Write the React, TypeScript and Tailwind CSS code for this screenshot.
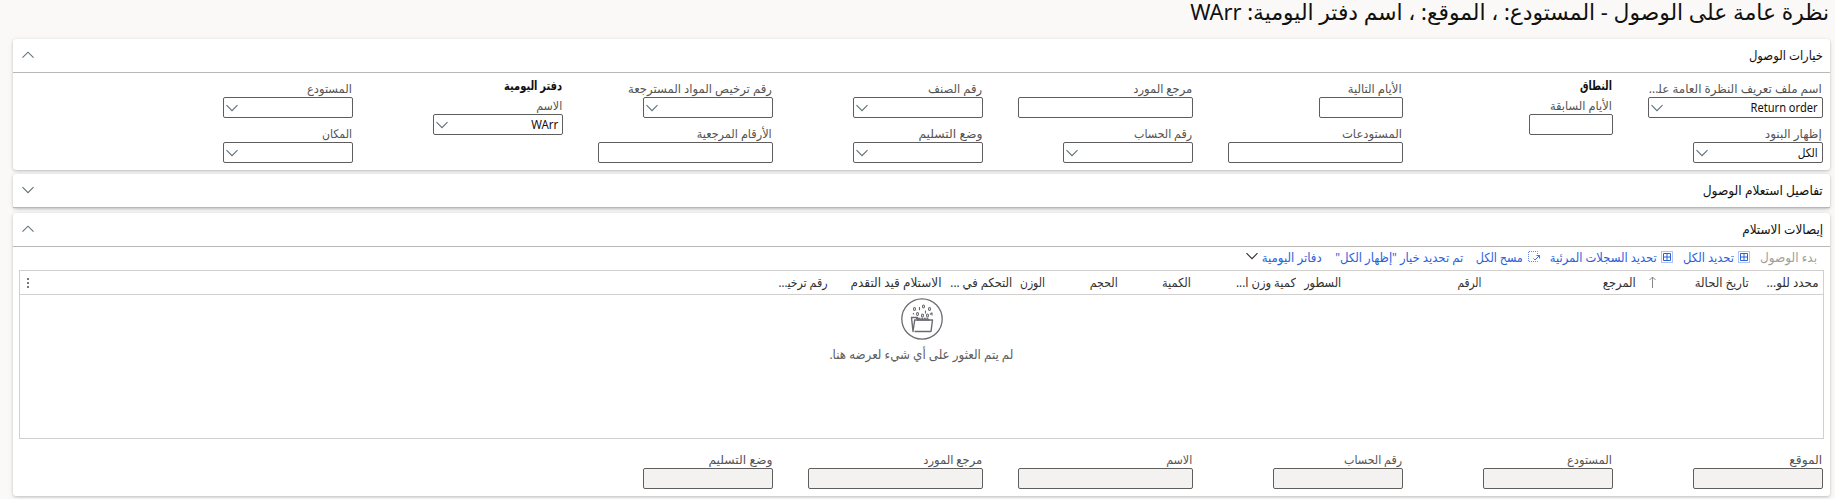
import { useLayoutEffect, useRef, useState, type ReactNode } from 'react';
import clsx from 'clsx';

/** Squeezes a single line of text into the width given by its class. */
function Fit({ className, children }: { className: string; children: ReactNode }) {
  const box = useRef<HTMLSpanElement>(null);
  const inner = useRef<HTMLSpanElement>(null);
  const [scale, setScale] = useState(1);
  useLayoutEffect(() => {
    if (box.current && inner.current && inner.current.offsetWidth > 0) {
      setScale(box.current.clientWidth / inner.current.getBoundingClientRect().width);
    }
  }, []);
  return (
    <span ref={box} className={clsx('block shrink-0 whitespace-nowrap', className)}>
      <span ref={inner} className="inline-block origin-right" style={{ transform: `scaleX(${scale})` }}>
        {children}
      </span>
    </span>
  );
}

function Chevron({ up = false, className = 'text-[#5f7079]' }: { up?: boolean; className?: string }) {
  return (
    <svg width="12" height="8" viewBox="0 0 12 8" fill="none" stroke="currentColor" strokeWidth="1.1" className={clsx('shrink-0', className)}>
      <path d={up ? 'M.5 6.7 6 1.2l5.5 5.5' : 'M.5 1.2 6 6.7l5.5-5.5'} />
    </svg>
  );
}

type FieldProps = {
  label: string;
  lw: string;
  w: string;
  value?: string;
  vw?: string;
  combo?: boolean;
  disabled?: boolean;
};

function Field({ label, lw, w, value, vw, combo, disabled }: FieldProps) {
  return (
    <div className="flex flex-col">
      <div className="flex h-4 pr-px text-[12px] leading-4 text-[#555351]">
        <Fit className={lw}>{label}</Fit>
      </div>
      <div
        className={clsx(
          'flex h-[21px] items-center justify-between rounded-[2px] border border-[#605e5c] pr-1 pl-[2px] text-[12px] leading-[19px] text-[#11100f]',
          w,
          disabled ? 'bg-[#f3f2f1]' : 'bg-white',
        )}
      >
        {value && vw ? <Fit className={vw}>{value}</Fit> : <span />}
        {combo && <Chevron />}
      </div>
    </div>
  );
}

function Column({ heading, hw, children }: { heading?: string; hw?: string; children: ReactNode }) {
  return (
    <div className={clsx('flex w-[175px] shrink-0 flex-col gap-2', heading ? 'pt-[4px]' : 'pt-2')}>
      {heading && hw ? (
        <div>
          <div className="flex h-[21px] pr-px font-['Noto_Sans','DejaVu_Sans_Condensed',sans-serif] text-[12.5px] leading-[17px] font-bold text-[#11100f]">
            <Fit className={hw}>{heading}</Fit>
          </div>
          {children}
        </div>
      ) : (
        children
      )}
    </div>
  );
}

function CardHeader({ title, tw, open }: { title: string; tw: string; open: boolean }) {
  return (
    <header className="flex h-[34px] shrink-0 items-center justify-between border-b border-[#b9b8b7] pr-[7px] pb-[2px] pl-[9px] text-[13px] leading-5 text-[#11100f]">
      <Fit className={tw}>{title}</Fit>
      <Chevron up={open} />
    </header>
  );
}

const card = 'rounded-[3px] bg-white shadow-[0_1px_3px_rgba(0,0,0,0.2),0_1px_6px_rgba(0,0,0,0.06)]';

function SelectGridIcon() {
  return (
    <svg width="12" height="12" viewBox="0 0 12 12" fill="none" stroke="#2a62dc" className="-mt-[2px] shrink-0">
      <rect x=".5" y=".5" width="11" height="11" strokeDasharray="1 1" strokeOpacity=".75" />
      <path d="M2.5 2.5h7v7h-7zM6 2.5v7M2.5 6h7" />
    </svg>
  );
}

function ClearIcon() {
  return (
    <svg width="12" height="12" viewBox="0 0 12 12" fill="none" stroke="#2a62dc" className="-mt-[2px] shrink-0">
      <path d="M9.5 3V.5h-9v10h9V9" strokeDasharray="1 1" strokeOpacity=".75" />
      <path d="M5.500 7.500 7 9l4.500-4.500M8.500 4.500h3v3" strokeWidth=".9" />
    </svg>
  );
}

function EmptyIcon() {
  return (
    <svg width="42" height="42" viewBox="0 0 42 42" fill="none" stroke="#6b6a70" className="shrink-0">
      <circle cx="21" cy="21" r="20.200" strokeWidth="1.300" />
      <path d="M13.500 33.500h16.500l1.500-11.500H13.700L12 33.500 10.500 19.500h6l1.500 2.500" strokeWidth="1.400" strokeLinejoin="round" />
      <path d="M15 20.500h13M16 22h12.500" strokeWidth="1.400" strokeDasharray="2 .6" />
      <g strokeWidth="1.100">
        <ellipse cx="13.500" cy="11" rx="1" ry="1.500" />
        <path d="M18.500 9v3.200M24.500 12.500v3M29 16.500l1.500-1.500M12 15l1 1.500M31 14.500v3" />
        <ellipse cx="22.500" cy="8.500" rx="1" ry="1.500" />
        <ellipse cx="28.500" cy="11" rx="1" ry="1.500" />
        <ellipse cx="16.500" cy="16" rx="1" ry="1.500" />
        <ellipse cx="21.500" cy="17.500" rx="1" ry="1.500" />
        <ellipse cx="26.500" cy="17.500" rx="1" ry="1.500" />
      </g>
    </svg>
  );
}

const headers: { text: string; cell: string; tw: string }[] = [
  { text: 'محدد للو...', cell: 'w-[70px]', tw: 'w-[52px]' },
  { text: 'تاريخ الحالة', cell: 'w-[93px]', tw: 'w-[54px]' },
  { text: '↑', cell: 'w-[20px]', tw: '' },
  { text: 'المرجع', cell: 'w-[155px]', tw: 'w-[33px]' },
  { text: 'الرقم', cell: 'w-[140px]', tw: 'w-[24px]' },
  { text: 'السطور', cell: 'w-[45px]', tw: 'w-[37px]' },
  { text: 'كمية وزن ا...', cell: 'w-[105px]', tw: 'w-[60px]' },
  { text: 'الكمية', cell: 'w-[73px]', tw: 'w-[29px]' },
  { text: 'الحجم', cell: 'w-[73px]', tw: 'w-[28px]' },
  { text: 'الوزن', cell: 'w-[33px]', tw: 'w-[25px]' },
  { text: 'التحكم في ...', cell: 'w-[70px]', tw: 'w-[62px]' },
  { text: 'الاستلام قيد التقدم', cell: 'w-[114px]', tw: 'w-[91px]' },
  { text: 'رقم ترخي\u200d...', cell: 'w-[60px]', tw: 'w-[49px]' },
];

export default function App() {
  return (
    <div
      dir="rtl"
      className="flex h-[499px] w-[1835px] flex-col overflow-hidden bg-[#faf9f8] pr-[5px] pl-[13px] font-['Noto_Sans','DejaVu_Sans',sans-serif]"
    >
      <h1 className="h-[39px] shrink-0 pr-px text-[22px] leading-[22px] text-[#11100f]">
        <Fit className="w-[639px]">نظرة عامة على الوصول - المستودع: ، الموقع: ، اسم دفتر اليومية: WArr</Fit>
      </h1>

      <section className={clsx('h-[131px] shrink-0', card)}>
        <CardHeader title="خيارات الوصول" tw="w-[74px]" open />
        <div className="flex gap-[35px] pr-[7px]">
          <Column>
            <Field label={'اسم ملف تعريف النظرة العامة عل\u200d...'} lw="w-[173px]" w="w-[175px]" value="Return order" vw="w-[67px]" combo />
            <Field label="إظهار البنود" lw="w-[57px]" w="w-[130px]" value="الكل" vw="w-[20px]" combo />
          </Column>
          <Column heading="النطاق" hw="w-[32px]">
            <Field label="الأيام السابقة" lw="w-[62px]" w="w-[84px]" />
          </Column>
          <Column>
            <Field label="الأيام التالية" lw="w-[54px]" w="w-[84px]" />
            <Field label="المستودعات" lw="w-[60px]" w="w-[175px]" />
          </Column>
          <Column>
            <Field label="مرجع المورد" lw="w-[59px]" w="w-[175px]" />
            <Field label="رقم الحساب" lw="w-[58px]" w="w-[130px]" combo />
          </Column>
          <Column>
            <Field label="رقم الصنف" lw="w-[54px]" w="w-[130px]" combo />
            <Field label="وضع التسليم" lw="w-[64px]" w="w-[130px]" combo />
          </Column>
          <Column>
            <Field label="رقم ترخيص المواد المسترجعة" lw="w-[144px]" w="w-[130px]" combo />
            <Field label="الأرقام المرجعية" lw="w-[75px]" w="w-[175px]" />
          </Column>
          <Column heading="دفتر اليومية" hw="w-[58px]">
            <Field label="الاسم" lw="w-[26px]" w="w-[130px]" value="WArr" vw="w-[27px]" combo />
          </Column>
          <Column>
            <Field label="المستودع" lw="w-[45px]" w="w-[130px]" combo />
            <Field label="المكان" lw="w-[30px]" w="w-[130px]" combo />
          </Column>
        </div>
      </section>

      <section className={clsx('mt-1 h-[34px] shrink-0', card)}>
        <CardHeader title="تفاصيل استعلام الوصول" tw="w-[120px]" open={false} />
      </section>

      <section className={clsx('mt-[5px] flex h-[283px] shrink-0 flex-col', card)}>
        <CardHeader title="إيصالات الاستلام" tw="w-[81px]" open />

        <div className="flex h-[23px] shrink-0 items-center pr-[13px] pb-[2px] text-[12.5px] leading-[21px] text-[#2a62dc]">
          <Fit className="w-[57px] text-[#a19f9d]">بدء الوصول</Fit>
          <div className="mr-[10px] flex items-center gap-1">
            <SelectGridIcon />
            <Fit className="w-[51px]">تحديد الكل</Fit>
          </div>
          <div className="mr-[10px] flex items-center gap-1">
            <SelectGridIcon />
            <Fit className="w-[107px]">تحديد السجلات المرئية</Fit>
          </div>
          <div className="mr-[10px] flex items-center gap-[5px]">
            <ClearIcon />
            <Fit className="w-[47px]">مسح الكل</Fit>
          </div>
          <Fit className="mr-[13px] w-[128px]">تم تحديد خيار "إظهار الكل"</Fit>
          <div className="mr-[13px] flex items-center gap-1">
            <Fit className="w-[60px]">دفاتر اليومية</Fit>
            <Chevron className="-mt-[3px] text-[#323130]" />
          </div>
        </div>

        <div className="mr-[6px] ml-[6px] flex h-[169px] shrink-0 flex-col border border-[#d2d0ce]">
          <div className="flex h-[24px] shrink-0 items-center border-b border-[#d2d0ce] pt-px pr-[4px] text-[12.5px] leading-[22px] text-[#323130]">
            {headers.map((h) => (
              <div key={h.text} className={clsx('flex shrink-0 items-center', h.cell)}>
                {h.tw ? (
                  <Fit className={h.tw}>{h.text}</Fit>
                ) : (
                  <svg width="7" height="12" viewBox="0 0 7 12" fill="none" stroke="#8a8886" className="-mt-[3px]">
                    <path d="M3.500 12V1M.5 4l3-3 3 3" />
                  </svg>
                )}
              </div>
            ))}
            <svg width="2" height="10" viewBox="0 0 2 10" fill="#7a7876" className="-mt-px mr-auto ml-[7px]">
              <path d="M0 0h2v2H0zM0 4h2v2H0zM0 8h2v2H0z" />
            </svg>
          </div>
          <div className="flex flex-col items-center pt-[3px] text-[13px] leading-[23px] text-[#605e5c]">
            <EmptyIcon />
            <Fit className="mt-[3px] w-[184px]">لم يتم العثور على أي شيء لعرضه هنا.</Fit>
          </div>
        </div>

        <div className="flex gap-[35px] pt-[5px] pr-[7px]">
          <Column><Field label="الموقع" lw="w-[33px]" w="w-[130px]" disabled /></Column>
          <Column><Field label="المستودع" lw="w-[45px]" w="w-[130px]" disabled /></Column>
          <Column><Field label="رقم الحساب" lw="w-[58px]" w="w-[130px]" disabled /></Column>
          <Column><Field label="الاسم" lw="w-[26px]" w="w-[175px]" disabled /></Column>
          <Column><Field label="مرجع المورد" lw="w-[59px]" w="w-[175px]" disabled /></Column>
          <Column><Field label="وضع التسليم" lw="w-[64px]" w="w-[130px]" disabled /></Column>
        </div>
      </section>
    </div>
  );
}
